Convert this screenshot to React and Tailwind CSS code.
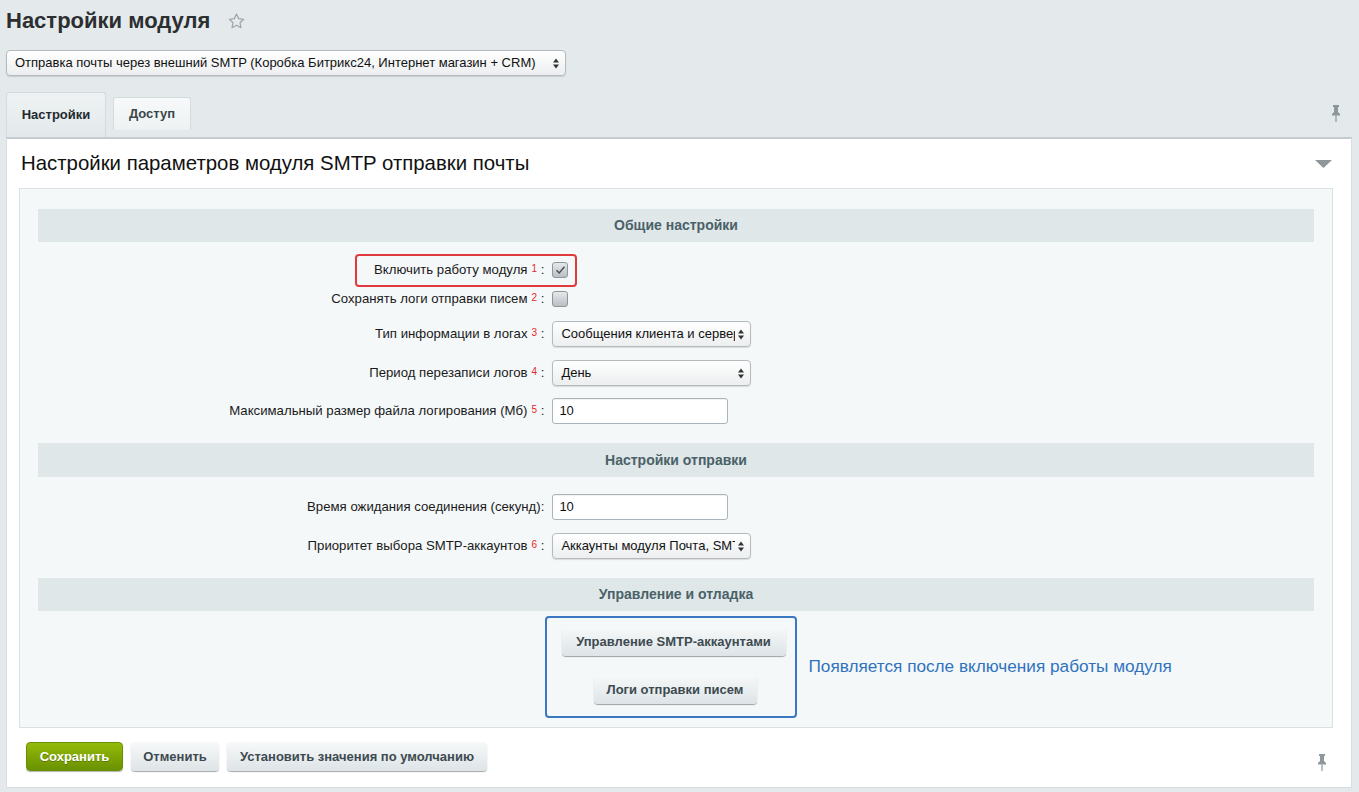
import React from 'react';

function Pin() {
  return (
    <svg width="12" height="18" viewBox="0 0 12 18">
      <path d="M3 1h6v2H8v5l2 2v1.5H2V10l2-2V3H3z" fill="#8d979c" />
      <path d="M6 11.5V18" stroke="#8d979c" strokeWidth="1.2" />
    </svg>
  );
}

function Sup({ n }) {
  return <sup className="text-[10px] text-[#e8262b] ml-[4px] relative top-[-2px]">{n}</sup>;
}

function Arrows() {
  return (
    <svg width="6" height="11" viewBox="0 0 6 11">
      <path d="M0 4.5L3 0.5L6 4.5z" fill="#333" />
      <path d="M0 6.5L3 10.5L6 6.5z" fill="#333" />
    </svg>
  );
}

function SelectBox({ value, className }) {
  return (
    <div
      className={`h-[26px] flex items-center rounded-[4px] border border-[#b4bbbf] bg-gradient-to-b from-white to-[#eceeef] shadow-[0_1px_1px_rgba(0,0,0,0.12)] text-[13px] text-[#111] ${className}`}
    >
      <div className="flex-1 overflow-hidden whitespace-nowrap pl-[8px]">{value}</div>
      <div className="w-[15px] flex justify-center shrink-0 pr-[3px]">
        <Arrows />
      </div>
    </div>
  );
}

function TextInput({ value }) {
  return (
    <div className="h-[26px] w-[176px] flex items-center rounded-[3px] border border-[#a8b6bc] bg-white pl-[6px] text-[13px] text-[#111] shadow-[inset_0_1px_1px_rgba(0,0,0,0.06)]">
      {value}
    </div>
  );
}

function Checkbox({ checked }) {
  return (
    <div className="w-[16px] h-[16px] rounded-[3px] border border-[#8e969a] bg-gradient-to-b from-[#e6e9eb] to-[#b9bfc3] flex items-center justify-center">
      {checked && (
        <svg width="11" height="10" viewBox="0 0 11 10">
          <path d="M1.5 5.2L4.2 8L9.5 1.8" fill="none" stroke="#4a4f52" strokeWidth="1.4" />
        </svg>
      )}
    </div>
  );
}

function Row({ label, sup, h, children, noSpace }) {
  return (
    <div className={`grid grid-cols-[40%_60%] items-center ${h}`}>
      <div className="text-right pr-[4px] text-[13.2px] text-[#1a1a1a] whitespace-nowrap">
        {label}
        {sup && <Sup n={sup} />}
        {noSpace ? ':' : ' :'}
      </div>
      <div className="pl-[4px] relative">{children}</div>
    </div>
  );
}

function SectionHeader({ title, h = 'h-[33px]' }) {
  return (
    <div className={`${h} bg-[#e0e7e9] flex items-center justify-center text-[14px] font-bold text-[#4a6168]`}>
      {title}
    </div>
  );
}

function GrayButton({ children, className = '' }) {
  return (
    <div
      className={`h-[29px] flex items-center justify-center rounded-[4px] bg-gradient-to-b from-[#f7f9f9] to-[#dde4e7] shadow-[0_1px_1px_rgba(0,0,0,0.35)] text-[13px] font-bold text-[#3d4a50] ${className}`}
    >
      {children}
    </div>
  );
}

export default function App() {
  return (
    <div className="min-h-[792px] bg-[#e4eaec] font-['Liberation_Sans',Arial,sans-serif] pt-[7px] pb-[6px]">
      <div className="pl-[6px] flex items-center h-[27px]">
        <h1 className="text-[22px] font-bold text-[#2c2f31]">Настройки модуля</h1>
        <svg className="ml-[18px] mt-[1px]" width="17" height="16" viewBox="0 0 24 23">
          <path
            d="M12 1.5l3.1 6.6 7.2.9-5.3 5 1.4 7.1L12 17.6l-6.4 3.5 1.4-7.1-5.3-5 7.2-.9z"
            fill="none"
            stroke="#9ea7ab"
            strokeWidth="1.8"
            strokeLinejoin="round"
          />
        </svg>
      </div>

      <div className="pl-[6px] mt-[16px]">
        <SelectBox
          className="w-[560px]"
          value="Отправка почты через внешний SMTP (Коробка Битрикс24, Интернет магазин + CRM)"
        />
      </div>

      <div className="mt-[16px] pl-[6px] pr-[17px] flex items-end h-[45px]">
        <div className="h-[45px] w-[100px] rounded-t-[3px] border border-b-0 border-[#d3dbde] bg-gradient-to-b from-[#eef2f3] to-[#e3e9eb] flex items-center justify-center text-[13px] font-bold text-[#1f2a2e]">
          Настройки
        </div>
        <div className="ml-[7px] mb-[7px] h-[33px] w-[78px] rounded-t-[3px] border border-b-0 border-[#d3dbde] bg-gradient-to-b from-[#f7f9fa] to-[#eef2f3] flex items-center justify-center text-[13px] font-bold text-[#3a464b]">
          Доступ
        </div>
        <div className="flex-1" />
        <div className="mb-[15px]">
          <Pin />
        </div>
      </div>

      <div className="ml-[6px] mr-[7px] bg-white border-t-2 border-t-[#c3cbce] border-r border-b border-l border-[#d6dee1]">
        <div className="h-[49px] flex items-center pl-[14px] pr-[19px]">
          <div className="flex-1 text-[20.4px] text-[#111]">Настройки параметров модуля SMTP отправки почты</div>
          <svg width="17" height="8" viewBox="0 0 17 8">
            <path d="M0 0h17L8.5 8z" fill="#8f979b" />
          </svg>
        </div>

        <div className="ml-[12px] mr-[18px] bg-[#f5f8f9] border border-[#d8e2e5] px-[18px] pt-[20px] pb-[9px]">
          <SectionHeader title="Общие настройки" />
          <div className="pt-[13px] pb-[12px]">
            <Row label="Включить работу модуля" sup="1" h="h-[30px]">
              <div className="absolute left-[-193px] top-[-8px] w-[222px] h-[33px] rounded-[4px] border-2 border-[#e13a3c]" />
              <Checkbox checked />
            </Row>
            <Row label="Сохранять логи отправки писем" sup="2" h="h-[28px]">
              <Checkbox />
            </Row>
            <Row label="Тип информации в логах" sup="3" h="h-[42px]">
              <SelectBox className="w-[199px]" value="Сообщения клиента и сервера" />
            </Row>
            <Row label="Период перезаписи логов" sup="4" h="h-[36px]">
              <SelectBox className="w-[199px]" value="День" />
            </Row>
            <Row label="Максимальный размер файла логирования (Мб)" sup="5" h="h-[40px]">
              <TextInput value="10" />
            </Row>
          </div>

          <SectionHeader title="Настройки отправки" h="h-[34px]" />
          <div className="pt-[11px] pb-[12px]">
            <Row label="Время ожидания соединения (секунд)" h="h-[38px]" noSpace>
              <TextInput value="10" />
            </Row>
            <Row label="Приоритет выбора SMTP-аккаунтов" sup="6" h="h-[40px]">
              <SelectBox className="w-[199px]" value="Аккаунты модуля Почта, SMTP" />
            </Row>
          </div>

          <SectionHeader title="Управление и отладка" />
          <div className="pt-[5px] flex justify-center">
            <div className="relative ml-[-11px] w-[252px] h-[102px] rounded-[4px] border-2 border-[#3a78c2] flex flex-col pt-[9px]">
              <GrayButton className="ml-[15px] w-[224px]">Управление SMTP-аккаунтами</GrayButton>
              <GrayButton className="ml-[47px] mt-[19px] w-[163px]">Логи отправки писем</GrayButton>
              <div className="absolute left-full ml-[14px] top-1/2 -translate-y-1/2 whitespace-nowrap text-[17.2px] text-[#2f73bf]">
                Появляется после включения работы модуля
              </div>
            </div>
          </div>
        </div>

        <div className="pt-[14px] pb-[16px] pl-[19px] pr-[23px]">
          <div className="h-[29px] flex items-center">
            <div className="h-[29px] w-[97px] flex items-center justify-center rounded-[4px] border border-[#6b8e00] bg-gradient-to-b from-[#93bb0a] to-[#6a9100] shadow-[0_1px_1px_rgba(0,0,0,0.3)] text-[13px] font-bold text-white [text-shadow:0_1px_0_rgba(0,0,0,0.25)]">
              Сохранить
            </div>
            <GrayButton className="ml-[8px] w-[88px]">Отменить</GrayButton>
            <GrayButton className="ml-[8px] w-[260px]">Установить значения по умолчанию</GrayButton>
            <div className="flex-1" />
            <div className="mt-[10px]">
              <Pin />
            </div>
          </div>
        </div>
      </div>
    </div>
  );
}
